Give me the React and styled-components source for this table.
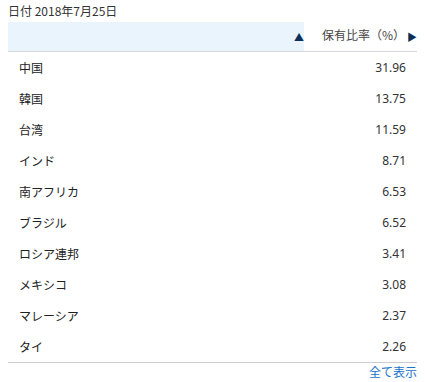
import React from "react";
import styled, { createGlobalStyle } from "styled-components";

const GlobalStyle = createGlobalStyle`
  body {
    margin: 0;
    background: #fff;
    font-family: "Noto Sans CJK JP", "Liberation Sans", sans-serif;
    color: #333;
  }
`;

const Wrap = styled.div`
  padding: 0 8px;
  font-size: 12px;
`;

const DateLine = styled.div`
  height: 22px;
  line-height: 22px;
  font-size: 12px;
  color: #333;
`;

const Table = styled.div`
  border-bottom: 1px solid #ccc;
`;

const HeadRow = styled.div`
  display: flex;
  height: 29px;
  border-bottom: 1px solid #d5d9df;
`;

const HeadCell = styled.div`
  display: flex;
  align-items: flex-end;
  justify-content: flex-end;
  padding-bottom: 8px;
  box-sizing: border-box;
  background: ${({ $active }) => ($active ? "#eaf4fd" : "transparent")};
  flex: ${({ $grow }) => ($grow ? 1 : "0 0 113px")};
  padding-right: 0;
  gap: 2px;
  color: #444;
`;

const Arrow = styled.span`
  font-size: 10px;
  color: #0b2f57;
  line-height: 12px;
`;

const Row = styled.div`
  display: flex;
  justify-content: space-between;
  align-items: center;
  height: 31px;
  padding: 0 11px;
`;

const Name = styled.span`
  color: #222;
`;

const Value = styled.span`
  font-family: "Noto Sans", "Liberation Sans", sans-serif;
  color: #333;
`;

const Footer = styled.div`
  display: flex;
  justify-content: flex-end;
  height: 18px;
  line-height: 18px;
`;

const MoreLink = styled.a`
  color: #1a73c9;
  text-decoration: none;
  font-size: 12px;
`;

const data = [
  ["中国", "31.96"],
  ["韓国", "13.75"],
  ["台湾", "11.59"],
  ["インド", "8.71"],
  ["南アフリカ", "6.53"],
  ["ブラジル", "6.52"],
  ["ロシア連邦", "3.41"],
  ["メキシコ", "3.08"],
  ["マレーシア", "2.37"],
  ["タイ", "2.26"],
];

export default function App() {
  return (
    <>
      <GlobalStyle />
      <Wrap>
        <DateLine>日付 2018年7月25日</DateLine>
        <Table>
          <HeadRow>
            <HeadCell $active $grow>
              <Arrow>▲</Arrow>
            </HeadCell>
            <HeadCell>
              <span>保有比率（%）</span>
              <Arrow>▶</Arrow>
            </HeadCell>
          </HeadRow>
          {data.map(([name, value]) => (
            <Row key={name}>
              <Name>{name}</Name>
              <Value>{value}</Value>
            </Row>
          ))}
        </Table>
        <Footer>
          <MoreLink href="#">全て表示</MoreLink>
        </Footer>
      </Wrap>
    </>
  );
}
